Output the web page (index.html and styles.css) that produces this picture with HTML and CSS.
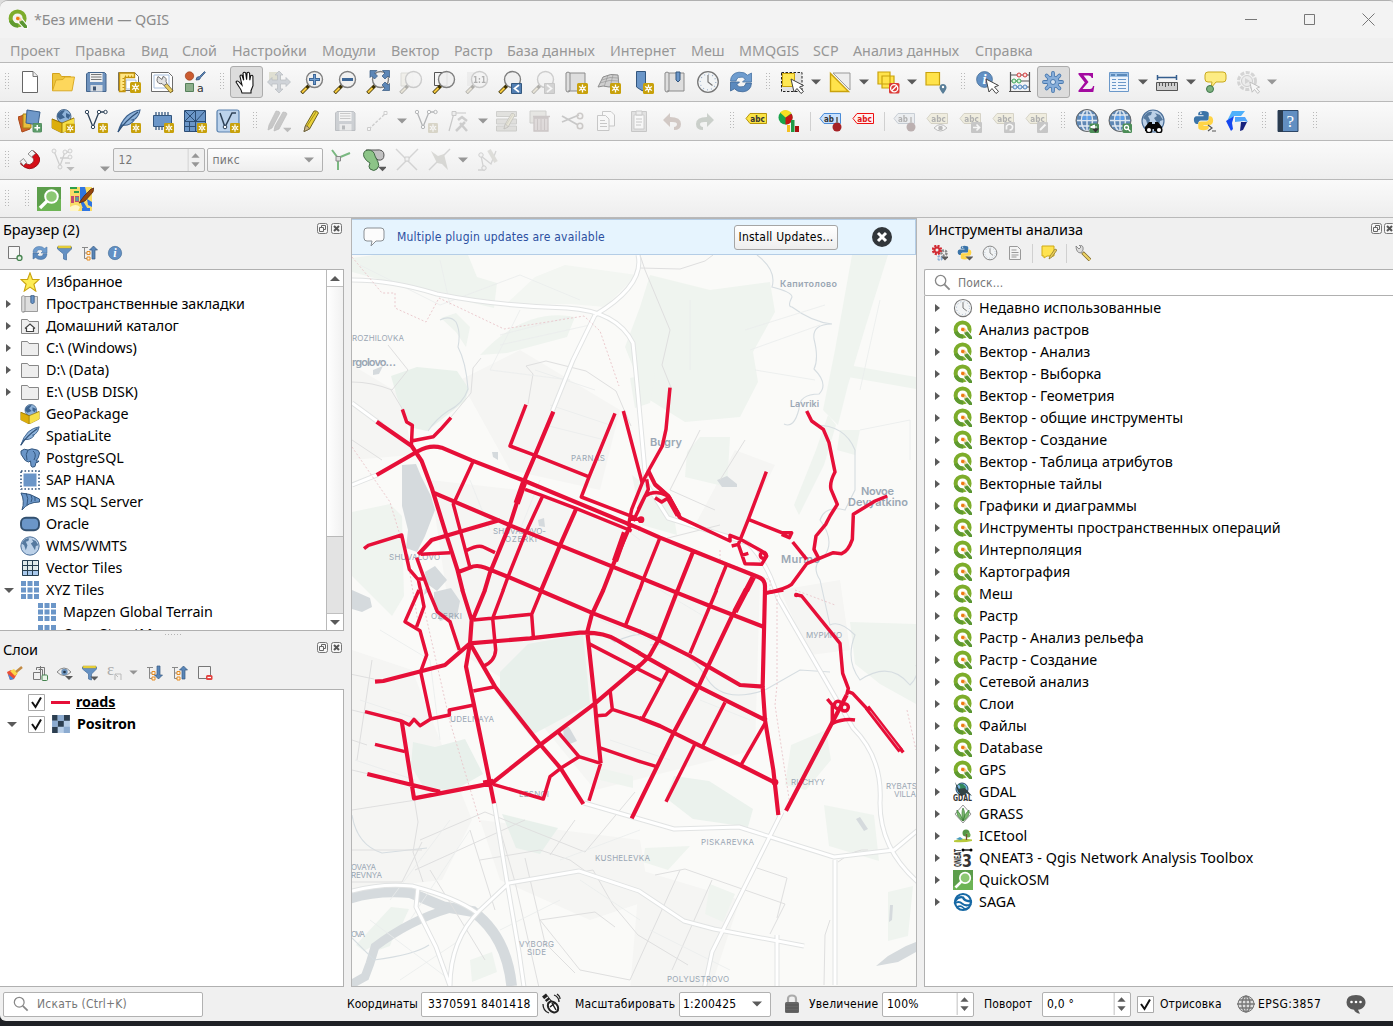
FILE: index.html
```html
<!DOCTYPE html>
<html lang="ru">
<head>
<meta charset="utf-8">
<title>*Без имени — QGIS</title>
<link rel="stylesheet" href="styles.css">
</head>
<body>
<svg class="defs" width="0" height="0" aria-hidden="true">
<symbol id="qgis" viewBox="0 0 20 20"><circle cx="9.6" cy="9.4" r="7" fill="none" stroke="#7dad2b" stroke-width="4"/><path d="M10 16.6a7 7 0 0 1-7-5" fill="none" stroke="#5f9a30" stroke-width="4"/><path d="M10.5 9.5h4l5.5 7v3.2h-4.2l-6-6z" fill="#fff"/><path d="M11.5 11.5h3.2l4.3 5.200v2.300h-2.700l-4.8-5z" fill="#5a9632"/><path d="M8 7.500h3.500l2.500 3-1.500 2-4.500-2z" fill="#f4d29a"/><circle cx="9.800" cy="9.500" r="1.700" fill="#ee7913"/></symbol>
<symbol id="star" viewBox="0 0 11 11"><rect width="11" height="11" rx="1.500" fill="#c8a10b"/><path d="M5.500 1.500v8M2 3.500l7 4M9 3.500l-7 4" stroke="#fff" stroke-width="1.300"/><circle cx="5.500" cy="5.500" r="1.900" fill="#fff"/><circle cx="5.500" cy="5.500" r=".8" fill="#c8a10b"/></symbol>
<symbol id="plus" viewBox="0 0 10 10"><rect width="10" height="10" rx="2" fill="#5b9a68" stroke="#3e7b4a" stroke-width=".6"/><path d="M5 2v6M2 5h6" stroke="#fff" stroke-width="1.600"/></symbol>
<symbol id="dn" viewBox="0 0 10 6"><path d="M0 .5h10L5 5.500z" fill="#5a5a5a"/></symbol>
<symbol id="new" viewBox="0 0 24 24"><path d="M4.500 1.500h10.500l4.500 4.500v16.500h-15z" fill="#fff" stroke="#666"/><path d="M15 1.500v5h4.500" fill="#eee" stroke="#777"/></symbol>
<symbol id="open" viewBox="0 0 24 24"><path d="M1.500 20.500v-17h7l2 3h9v3" fill="#eec53b" stroke="#d3a21d"/><path d="M1.500 20.800 5 10l7-.5 2-2.500h9.500l-2.500 13.800z" fill="#fdd75c" stroke="#d9aa27"/></symbol>
<symbol id="save" viewBox="0 0 24 24"><path d="M2.500 4 4 2.500H20.500l1.500 1.500V21.500H2.500z" fill="#6e92bd" stroke="#44658c"/><path d="M6 3h12.500v9H6z" fill="#f1f1f1"/><path d="M7 4.500h10.500M7 7h10.500M7 9.500h10.500" stroke="#777"/><path d="M6.500 15h12v6.500h-12z" fill="#d7dce2"/><path d="M9 16.500h3v4H9z" fill="#3f5573"/></symbol>
<symbol id="layout" viewBox="0 0 24 24"><path d="M1.500 2.500h16l4 4v14h-20z" fill="#fff" stroke="#6d6d6d"/><path d="M9 10h10v9H9z" fill="#fff" stroke="#a9c0dd"/><path d="M2.500 3h15v4.500H8v14H2.500z" fill="#ffe684" stroke="#c3930a" stroke-width="1.400"/><path d="M6.500 8v13M8 6.500h9" stroke="#c3930a" stroke-dasharray="1 2" stroke-width="2"/><use href="#star" x="13" y="12" width="11" height="11"/></symbol>
<symbol id="layoutm" viewBox="0 0 24 24"><path d="M1.500 2.500h17l4 4v15h-21z" fill="#fff" stroke="#6d6d6d"/><path d="M4 5h15v13H4z" fill="none" stroke="#a9c0dd"/><path d="M14 13l8 9" stroke="#69510f" stroke-width="4"/><path d="M14 13l7.500 8.500" stroke="#e7cd66" stroke-width="2.800"/><path d="M8 6.500l4 3 1-3q4 1 3 5l1 2-3 2-2-2q-4 1-5-3 0-2 1-4z" fill="#e3e3e3" stroke="#656565" stroke-width=".9"/></symbol>
<symbol id="style" viewBox="0 0 24 24"><circle cx="6.500" cy="6" r="4.200" fill="#cb5c31" stroke="#9b3f1c" stroke-width=".7"/><path d="M13 10q0-3.500 3.500-3.500l5-5 .8 1-4.600 5q-.5 3-4.700 2.500z" fill="#5c85b8" stroke="#34557c" stroke-width=".8"/><path d="M2.500 13.500h8v8h-8z" fill="#8dae8b" stroke="#55805a"/><text x="14" y="21.500" class="glyph plain" font-size="11">a</text></symbol>
<symbol id="hand" viewBox="0 0 24 24"><path d="M8 23q-.5-3-2.500-5.500L2 12q1-2 3.500.3L8 15 6 6.500q0-2 2-1.300l1.700 5-.7-7q1.300-2 2.800 0l.8 6.500.5-7q1.500-1.200 2.500.5l.2 7 .9-4.500q1.700-1 2.200.5l.1 9.500-2 5v2.300z" fill="#fff" stroke="#111" stroke-width="1.100"/></symbol>
<symbol id="pan4" viewBox="0 0 24 24"><path d="M2 2h12v12H2z" fill="#dfdfd2"/><path d="M12 1l4 4h-2.500v5H19V7.500l4.500 4.500-4.500 4.500V14h-5.500v5H16l-4 4-4-4h2.500v-5H5v2.500L.5 12 5 7.500V10h5.500V5H8z" fill="#cfd3d8" stroke="#b8bcc0" stroke-width=".7"/></symbol>
<symbol id="lens" viewBox="0 0 24 24"><path d="M1.500 23 9 15.500" stroke="#3d3102" stroke-width="3.600"/><path d="M2 22.500l4.500-4.500" stroke="#f5c93f" stroke-width="2.200"/><circle cx="14.500" cy="9.500" r="8" fill="#eff0f0" fill-opacity=".9" stroke="#808080" stroke-width="1.400"/></symbol>
<symbol id="zin" viewBox="0 0 24 24"><use href="#lens"/><path d="M14.500 4v11M9 9.500h11" stroke="#3d6797" stroke-width="3"/><path d="M14.500 5v9M10 9.500h9" stroke="#6f9dcf" stroke-width="1.200"/></symbol>
<symbol id="zout" viewBox="0 0 24 24"><use href="#lens"/><path d="M9 9.500h11" stroke="#3d6797" stroke-width="3"/></symbol>
<symbol id="zfull" viewBox="0 0 24 24"><use href="#lens"/><path d="M4 .5h7L8.500 3l3 3-3 3-3-3-1.500 1.500zM23.500.5h-7L19 3l-3 3 3 3 3-3 1.500 1.500zM23.500 20.500h-7L19 18l-3-3 3-3 3 3 1.500-1.500z" fill="#5c86b6" stroke="#34587f" stroke-width=".7"/></symbol>
<symbol id="zsel" viewBox="0 0 24 24"><path d="M2 3h12v13H2z" fill="#eee5ad" stroke="#b1ab86"/><use href="#lens"/></symbol>
<symbol id="zlay" viewBox="0 0 24 24"><path d="M2.500 2.500H15v13H2.500z" fill="#f6f6f6" stroke="#555"/><use href="#lens"/></symbol>
<symbol id="znat" viewBox="0 0 24 24"><path d="M2 2h12v14H2z" fill="#ddd"/><use href="#lens"/><text x="8" y="13" class="glyph" font-size="9" textLength="13" lengthAdjust="spacingAndGlyphs">1:1</text></symbol>
<symbol id="zprev" viewBox="0 0 24 24"><use href="#lens"/><path d="M13.500 13.500h10v10h-10z" fill="#527fb3" stroke="#34587f"/><path d="M21 15l-4.500 3.500L21 22" fill="none" stroke="#fff" stroke-width="1.700"/></symbol>
<symbol id="znext" viewBox="0 0 24 24"><use href="#lens"/><path d="M13.500 13.500h10v10h-10z" fill="#999" stroke="#777"/><path d="M16 15l4.500 3.500L16 22" fill="none" stroke="#fff" stroke-width="1.700"/></symbol>
<symbol id="map" viewBox="0 0 24 24"><path d="M2 3q2-2 4 0v17q0 2-2 2t-2-2zM6 3h15v18H4" fill="#dedede" stroke="#8b8b8b"/></symbol>
<symbol id="map2" viewBox="0 0 24 24"><use href="#map"/><use href="#star" x="13" y="13" width="11" height="11"/></symbol>
<symbol id="map3" viewBox="0 0 24 24"><path d="M1 17 6 7q8-4 15-2l1 11-10 1q-6-2-11 0z" fill="#cfcfcf" stroke="#8d8d8d"/><path d="M3 13q9-4 19-2M5 10q8-4 16-2M11 5l-4 12M16 5l-3 12" stroke="#999" stroke-width=".7" fill="none"/><use href="#star" x="13" y="13" width="11" height="11"/></symbol>
<symbol id="bm" viewBox="0 0 24 24"><path d="M6.500 1.500h9V22l-4.500-2-4.500-3z" fill="#6b96c8" stroke="#33567e"/><use href="#star" x="13" y="13" width="11" height="11"/></symbol>
<symbol id="bmk" viewBox="0 0 24 24"><use href="#map"/><path d="M13 2h4v8l-2 2-2-2z" fill="#6b96c8" stroke="#33567e"/></symbol>
<symbol id="clock" viewBox="0 0 24 24"><circle cx="12" cy="12" r="10.300" fill="#f2f4f5" stroke="#777" stroke-width="1.300"/><circle cx="12" cy="12" r="7.800" fill="none" stroke="#9bb0c9" stroke-width="1.200" stroke-dasharray="1 3.080"/><path d="M12 5v7l4.500 3.500" fill="none" stroke="#777" stroke-width="1.200"/></symbol>
<symbol id="refresh" viewBox="0 0 24 24"><path d="M1.500 11Q2 3 10 2.200q6-.3 8.500 3L22.500 3v9h-9l3-3q-3-3-7-1.500-2 1-2.500 3.500z" fill="#6f9dcf" stroke="#4873a4" stroke-width=".8"/><path d="M22.500 13q-.5 8-8.500 8.800-6 .3-8.500-3L1.500 21v-9h9l-3 3q3 3 7 1.500 2-1 2.500-3.500z" fill="#5a89be" stroke="#3d6797" stroke-width=".8"/></symbol>
<symbol id="cursor" viewBox="0 0 14 16"><path d="M1 1l3 13 3-3.500 4 5 2.500-2-4-4.500 4-1.500z" fill="#fff" stroke="#444" stroke-width="1"/></symbol>
<symbol id="select" viewBox="0 0 24 24"><path d="M1.500 2.500h20.500v19H1.500z" fill="#e4e4e4" stroke="#222" stroke-dasharray="2.500 1.500"/><path d="M2.500 3.500h12v13h-12z" fill="#ffe854" stroke="#c9a20c"/><use href="#cursor" x="10" y="8" width="14" height="16"/></symbol>
<symbol id="selval" viewBox="0 0 24 24"><path d="M5 3h17v17z" fill="#eee" stroke="#999"/><path d="M2.500 3.500v18h18z" fill="#ffe34b" stroke="#c9a20c" stroke-width="1.400"/></symbol>
<symbol id="desel" viewBox="0 0 24 24"><path d="M2 2h12v12H2zM6 6h12v12H6z" fill="#ffe34b" stroke="#c9a20c" stroke-width="1.200"/><rect x="13" y="13" width="10.500" height="10.500" rx="1.500" fill="#dc3a37"/><circle cx="18.200" cy="18.200" r="3.600" fill="none" stroke="#fff" stroke-width="1.300"/><path d="M15.700 20.700l5-5" stroke="#fff" stroke-width="1.300"/></symbol>
<symbol id="selloc" viewBox="0 0 24 24"><path d="M2 2.500h13.500V15H2z" fill="#ffe34b" stroke="#c9a20c" stroke-width="1.200"/><path d="M19 24q-4-5-3.500-7 .7-3 3.500-3t3.500 3q.5 2-3.500 7z" fill="#597e98"/><circle cx="19" cy="17" r="1.200" fill="#fff"/></symbol>
<symbol id="info" viewBox="0 0 24 24"><circle cx="12" cy="12" r="10" fill="#6290c4" stroke="#477098"/><text x="9.500" y="18" fill="#fff" class="serif it" font-size="18">i</text></symbol>
<symbol id="ident" viewBox="0 0 24 24"><use href="#info" width="19" height="19"/><use href="#cursor" x="10" y="8" width="14" height="16"/></symbol>
<symbol id="abacus" viewBox="0 0 24 24"><path d="M2.500 2v19M21.500 2v19M1 21.500h22M3 5h18M3 11h18M3 17h18" stroke="#555" stroke-width="1.200"/><g fill="#ffdede" stroke="#d23b3b"><circle cx="11" cy="5" r="2"/><circle cx="17" cy="5" r="2"/></g><g fill="#d8f2da" stroke="#3fa95a"><circle cx="6" cy="11" r="2"/><circle cx="11" cy="11" r="2"/></g><g fill="#d6e6f8" stroke="#4f86c0"><circle cx="7" cy="17" r="2"/><circle cx="12" cy="17" r="2"/><circle cx="17" cy="17" r="2"/></g></symbol>
<symbol id="gear" viewBox="0 0 24 24"><g stroke="#4878ae" stroke-width="3.800" stroke-linecap="round"><path d="M12 3v18M3 12h18M5.600 5.600l12.800 12.800M18.400 5.600 5.600 18.400"/></g><circle cx="12" cy="12" r="6.500" fill="#4878ae"/><g stroke="#86add9" stroke-width="2.200" stroke-linecap="round"><path d="M12 3v18M3 12h18M5.600 5.600l12.800 12.800M18.400 5.600 5.600 18.400"/></g><circle cx="12" cy="12" r="5.700" fill="#86add9"/><circle cx="12" cy="12" r="2.500" fill="#d7e4f3" stroke="#4878ae"/></symbol>
<symbol id="sigma" viewBox="0 0 24 24"><path d="M4.500 3H19v5h-1.300q-.5-2.500-3-2.500H9.500L14.500 12l-6 7H16q2.500 0 3-3h1.300l-1 6H4.500v-1.500l6.300-8-6.300-8z" fill="#a30ba0"/></symbol>
<symbol id="table" viewBox="0 0 24 24"><path d="M2.500 2.500h19v19h-19z" fill="#eef4fb" stroke="#6b98c9"/><path d="M3 3h18v4H3z" fill="#9fc2e6"/><path d="M4 5h4M10 5h10" stroke="#4677ab" stroke-width="1.500"/><path d="M5 9.500h4M11 9.500h8M5 12.500h4M11 12.500h8M5 15.500h4M11 15.500h8M5 18.500h4M11 18.500h8" stroke="#6b98c9"/></symbol>
<symbol id="ruler" viewBox="0 0 24 24"><path d="M2.500 5v5M21.500 5v5M2.500 7.500h19" stroke="#345e8e" stroke-width="1.500"/><path d="M1.500 12.500h21v8h-21z" fill="#cfcfcf" stroke="#555"/><path d="M4.500 13v3M7.500 13v3M10.500 13v4M13.500 13v3M16.500 13v3M19.500 13v3" stroke="#555"/></symbol>
<symbol id="tip" viewBox="0 0 24 24"><path d="M5 2h15q3 0 3 3v4q0 3-3 3h-7l-5 6 1-6H5q-3 0-3-3V5q0-3 3-3z" fill="#fdec83" stroke="#c9a91d"/><circle cx="7" cy="19" r="3.500" fill="#7cb17e" stroke="#41764c"/></symbol>
<symbol id="action" viewBox="0 0 24 24"><circle cx="11" cy="11" r="8.500" fill="#eee" stroke="#999" stroke-width="3" stroke-dasharray="4 1.500"/><circle cx="11" cy="11" r="5.500" fill="#ddd" stroke="#888"/><path d="M9 8v6l5-3z" fill="#999"/><use href="#cursor" x="13" y="11" width="11" height="13"/></symbol>
<symbol id="dsm" viewBox="0 0 24 24"><path d="M0 8l6-2 6 14-8 3z" fill="#cf6127" stroke="#a9481a"/><path d="M5 5h8v14H5z" fill="#e8bd3f" stroke="#a78115"/><path d="M9 1l13 2-2 13-12-2z" fill="#6f98c9" stroke="#3b618e"/><use href="#plus" x="14.500" y="14" width="9.500" height="9.500"/></symbol>
<symbol id="gpkgb" viewBox="0 0 24 24"><path d="M1 10v9l10 5V14z" fill="#dcae0c" stroke="#8b6b06" stroke-width=".7"/><path d="M11 14l12-5v9l-12 6z" fill="#f7e049" stroke="#8b6b06" stroke-width=".7"/><circle cx="13" cy="7.500" r="7" fill="#8fb3d9" stroke="#32557a" stroke-width=".8"/><path d="M7 4.500q4-4 7-3l-3 4 3 3-5 2-3-3zM15 4l4.500 2-2 4-2.500-2z" fill="#3e648f"/><path d="M1 10l10 4v10L1 19z" fill="#dcae0c"/><path d="M11 14l12-5v9l-12 6z" fill="#f7e049"/><path d="M1 10l10 4 12-5M11 14v10" fill="none" stroke="#8b6b06" stroke-width=".8"/></symbol>
<symbol id="gpkg" viewBox="0 0 24 24"><use href="#gpkgb"/><use href="#star" x="14.500" y="14.500" width="9.500" height="9.500"/></symbol>
<symbol id="vec" viewBox="0 0 24 24"><path d="M3 3l6 15 6-15h6" fill="none" stroke="#2f4358" stroke-width="1.300"/><g fill="#fff" stroke="#2f4358"><circle cx="3" cy="3" r="1.700"/><circle cx="9" cy="18" r="1.700"/><circle cx="15" cy="3" r="1.700"/><circle cx="21.500" cy="3" r="1.700"/></g><use href="#star" x="14" y="14" width="10" height="10"/></symbol>
<symbol id="featherb" viewBox="0 0 24 24"><path d="M1 23q3-10 9-16 6-5 13-6-1 6-5 9l-3 1 2 .5q-5 6-12 4.500z" fill="#8fb3da" stroke="#3b618e" stroke-width="1.100"/><path d="M1 23Q8 12 21 3" fill="none" stroke="#2f5077" stroke-width="1.300"/></symbol>
<symbol id="feather" viewBox="0 0 24 24"><use href="#featherb"/><use href="#star" x="14" y="14" width="10" height="10"/></symbol>
<symbol id="chip" viewBox="0 0 24 24"><path d="M6 3v18M9 3v18M12 3v18M15 3v18M18 3v18" stroke="#33567e" stroke-width="1.300"/><path d="M3.500 6.500h18v11h-18z" fill="#6b96c8" stroke="#33567e"/><use href="#star" x="14" y="14" width="10" height="10"/></symbol>
<symbol id="mesh" viewBox="0 0 24 24"><path d="M1.500 1.500h21v21h-21z" fill="#6b96c8" stroke="#2c4d74"/><path d="M1.500 12.500h21M12.500 1v21M2 2l10.500 10.500L22 2M2 12 12 2M2 17.500h10M6.500 12.500V22" stroke="#2c4d74" stroke-width="1" fill="none"/><use href="#star" x="14" y="14" width="10" height="10"/></symbol>
<symbol id="virt" viewBox="0 0 24 24"><rect x="1" y="1" width="22" height="22" rx="2" fill="#bcd3ec" stroke="#5880ad" stroke-width="1.200"/><path d="M4 4l5 14L16 4h4" fill="none" stroke="#2f4358" stroke-width="1.500"/><circle cx="9" cy="18" r="1.800" fill="#fff" stroke="#2f4358"/><use href="#star" x="14" y="14" width="10" height="10"/></symbol>
<symbol id="pencil" viewBox="0 0 24 24"><path d="M4 22.500l1.500-6L14 2q3-1 4.500 2L9.500 20z" fill="#ead139" stroke="#6d6122"/><path d="M4 22.500l1.500-6q3 .5 4 3.500z" fill="#ccb784" stroke="#5b513a" stroke-width=".7"/><path d="M7 17 16 3" stroke="#a08e17"/></symbol>
<symbol id="pencils" viewBox="0 0 24 24"><g fill="#777" stroke="#555" stroke-width=".7"><path d="M1 21l1-5L9 2q4 0 4 2L5 19z"/><path d="M7 22l1-5 8-14q4 0 4 2l-8 15z"/></g><use href="#dn" x="16" y="18" width="9" height="6"/></symbol>
<symbol id="line" viewBox="0 0 24 24"><path d="M3 20 20 4" stroke="#888" stroke-width="1.400" stroke-dasharray="3 1.500"/><path d="M1.500 18.500h3v3h-3zM18 2.500h3v3h-3z" fill="#fff" stroke="#888"/></symbol>
<symbol id="vtool" viewBox="0 0 24 24"><path d="M2 22 7 4h12" fill="none" stroke="#777" stroke-width="1.200"/><path d="M5 2.500h4v4H5z" fill="#ddd" stroke="#777"/><path d="M9 22l9-9M20 22l-7-8M11 11l4-3 5 4" fill="none" stroke="#888" stroke-width="2.500"/></symbol>
<symbol id="bulk" viewBox="0 0 24 24"><path d="M1.500 2.500h20v5h-20zM1.500 10h20v5h-20zM1.500 17h20v5h-20z" fill="#bebd9e" stroke="#8b8a71"/><use href="#pencil" x="6" width="18" height="24"/></symbol>
<symbol id="trash" viewBox="0 0 24 24"><path d="M2 2h16v12H2z" fill="#cfcaa5" stroke="#8b8a71"/><path d="M5 7.500h17M6 9v13h14V9z" fill="#d8a5a5" stroke="#a86b6b" stroke-width="1.300"/><path d="M9.500 10v11M13 10v11M16.500 10v11" stroke="#a86b6b"/></symbol>
<symbol id="cut" viewBox="0 0 24 24"><path d="M1 7l16 9M1 13l17-7" stroke="#777" stroke-width="1.800"/><circle cx="19" cy="7" r="2.700" fill="none" stroke="#976" stroke-width="1.600"/><circle cx="19" cy="17" r="2.700" fill="none" stroke="#976" stroke-width="1.600"/></symbol>
<symbol id="copy" viewBox="0 0 24 24"><g fill="#fff" stroke="#777"><path d="M8.500 2.500H17l3.500 3.500v11h-12z"/><path d="M3.500 6.500h8l3.500 3.500v11.500H3.500z"/></g><path d="M6 11.500h5M6 14.500h7M6 17.500h7" stroke="#777"/></symbol>
<symbol id="paste" viewBox="0 0 24 24"><path d="M4.500 2.500h15v20h-15z" fill="#bbb" stroke="#777"/><path d="M7 6h10v14H7z" fill="#fff" stroke="#888"/><path d="M9 2h6v4H9zM9 10h6M9 13h6M9 16h5" fill="#ddd" stroke="#777"/></symbol>
<symbol id="undo" viewBox="0 0 24 24"><path d="M3 11l7-7v4q11 0 11 7 0 6-7 6v-3q3-.5 3-3t-7-2v5z" fill="#a08a80"/></symbol>
<symbol id="redo" viewBox="0 0 24 24"><path d="M21 11l-7-7v4Q3 8 3 15q0 6 7 6v-3q-3-.5-3-3t7-2v5z" fill="#8f9b8f"/></symbol>
<symbol id="tagy" viewBox="0 0 24 24"><path d="M2 9.500 6 4.500h16.500v10H6z" fill="#fbe445" stroke="#b7950b"/><text x="6.300" y="12.600" class="glyph" font-size="9" textLength="14.500" lengthAdjust="spacingAndGlyphs">abc</text></symbol>
<symbol id="tagr" viewBox="0 0 24 24"><path d="M2 9.500 6 4.500h16.500v10H6z" fill="#fff0f0" stroke="#e11"/><text x="6.300" y="12.600" class="glyph red" font-size="9" textLength="14.500" lengthAdjust="spacingAndGlyphs">abc</text></symbol>
<symbol id="tagb" viewBox="0 0 24 24"><path d="M2 9.500 6 4.500h16.500v10H6z" fill="#c9e2ff" stroke="#4a8cd8"/><text x="6" y="12.600" class="glyph" font-size="9" textLength="10" lengthAdjust="spacingAndGlyphs">ab</text><circle cx="19" cy="18" r="4.500" fill="#a62226"/><path d="M19 8v6" stroke="#777" stroke-width="2"/></symbol>
<symbol id="tage" viewBox="0 0 24 24"><use href="#tagy"/><path d="M9 19q6.500-7 13 0-6.500 6-13 0z" fill="#fff" stroke="#555"/><circle cx="15.500" cy="19" r="2.300" fill="#555"/></symbol>
<symbol id="taga" viewBox="0 0 24 24"><use href="#tagy"/><rect x="13" y="13" width="11" height="11" rx="1" fill="#777"/><path d="M15 18.500h6M18.500 15.500l3 3-3 3" fill="none" stroke="#fff" stroke-width="1.700"/></symbol>
<symbol id="tago" viewBox="0 0 24 24"><use href="#tagy"/><rect x="13" y="13" width="11" height="11" rx="1" fill="#777"/><path d="M15.500 20.500V17q3-3.500 6 0 .5 4-3 4" fill="none" stroke="#fff" stroke-width="1.700"/></symbol>
<symbol id="tagp" viewBox="0 0 24 24"><use href="#tagy"/><rect x="13" y="13" width="11" height="11" rx="1" fill="#777"/><path d="M16 21l5.500-5.500" stroke="#fff" stroke-width="2"/></symbol>
<symbol id="pie" viewBox="0 0 24 24"><circle cx="8.500" cy="8.500" r="7" fill="#19a44b"/><path d="M8.500 8.500v7a7 7 0 0 0 6-10.700z" fill="#c41414"/><path d="M8.500 8.500 3 3.500q6-5 11.500.5z" fill="#f8de22"/><path d="M10 16h3v7h-3z" fill="#f5c020"/><path d="M14 11h3.500v12H14z" fill="#1f9a45"/><path d="M18 17h4v6h-4z" fill="#a81010"/></symbol>
<symbol id="wglobe" viewBox="0 0 24 24"><circle cx="12" cy="11.500" r="11" fill="#5f88b5"/><path d="M4 6h16M2 11.500h20M4 17h16M12 1v21" stroke="#dfe8f2" stroke-width="1.500"/><ellipse cx="12" cy="11.500" rx="5.500" ry="10.500" fill="none" stroke="#dfe8f2" stroke-width="1.500"/><circle cx="12" cy="11.500" r="11" fill="none" stroke="#666" stroke-width="1"/><path d="M8 7h3.500v4H7zM12.500 7H16v4h-3.500z" fill="#5c9ee8"/></symbol>
<symbol id="globe1" viewBox="0 0 24 24"><use href="#wglobe"/><rect x="14.500" y="14.500" width="9.500" height="9.500" rx="1.500" fill="#4c8d57"/><path d="M15.500 18l4-2v4zM18 18h4" fill="#fff" stroke="#fff"/><path d="M17 19.500h7l-3.500 4z" fill="#333"/></symbol>
<symbol id="globe2" viewBox="0 0 24 24"><use href="#wglobe"/><rect x="14.500" y="14.500" width="9.500" height="9.500" rx="1.500" fill="#4c8d57"/><circle cx="18.500" cy="18.500" r="2" fill="none" stroke="#fff" stroke-width="1.300"/><path d="M20 20l2.500 2.500" stroke="#fff" stroke-width="1.300"/></symbol>
<symbol id="globew" viewBox="0 0 24 24"><circle cx="12" cy="12" r="11" fill="#bcd1e8" stroke="#4d719a" stroke-width="1.200"/><path d="M4 6q3-4 7-3l-1 3-3 1 2 4-2 6-2-6-3-2zM14 4l5 2 3 5-3 1-1 5-3-5-2-3 3-2z" fill="#55799f"/></symbol>
<symbol id="bino" viewBox="0 0 24 24"><use href="#globew"/><path d="M8 13h3v2h3v-2h3l4 5v4h-8v-2h-2v2H4v-4z" fill="#080808"/><circle cx="8" cy="21" r="2.800" fill="#fff" stroke="#080808" stroke-width="1.500"/><circle cx="18" cy="21" r="2.800" fill="#fff" stroke="#080808" stroke-width="1.500"/></symbol>
<symbol id="py" viewBox="0 0 24 24"><path d="M6 4q0-3 6-3t6 3v6q0 2-2 2H9q-3 0-3 4H4q-3-1-3-5t3-4h8V6H6z" fill="#3b74a8"/><path d="M18 7h2q3 1 3 5t-3 5h-8v1h6v2q0 3-6 3t-6-3v-5q0-2 3-2h6q3 0 3-4z" fill="#ffd447"/><circle cx="9" cy="3.500" r="1" fill="#fff"/></symbol>
<symbol id="pycon" viewBox="0 0 24 24"><use href="#py" width="21" height="21" x="1" y="1"/><path d="M16 16l4 3-4 3M20 22h4" stroke="#555" stroke-width="1.200" fill="none"/></symbol>
<symbol id="cloud" viewBox="0 0 24 24"><path d="M7 2h13l-4 5H9L2 12z" fill="#4fb1fb"/><path d="M1 12l8-5-2 7 1 6-2 2z" fill="#1547ef"/><path d="M10 8h10l3 5-4-1-9 1z" fill="#4fa4fb"/><path d="M16 13l6 0-4 8-3 1z" fill="#16227e"/></symbol>
<symbol id="help" viewBox="0 0 24 24"><path d="M2 1.500h20v21H2z" fill="#628fc2" stroke="#2c4666"/><path d="M2 1h5v22H2z" fill="#2b3c50"/><text x="10.500" y="17.500" fill="#fff" class="serif plain" font-size="17">?</text></symbol>
<symbol id="magnet" viewBox="0 0 24 24"><g transform="translate(1.500 0)"><path d="M4 12l3 4q3 2 6-1 3-3 0-6l-3-3 4-3q10 7 4 14-8 8-17-1z" fill="#d60e17" stroke="#8b060c" stroke-width=".8"/><path d="M.5 13.500l3.500-3 3 4-3 3zM8.500 6l4-4L16 5.500l-4 3.500z" fill="#f4f4f4" stroke="#777" stroke-width=".8"/></g></symbol>
<symbol id="snap" viewBox="0 0 24 24"><path d="M3 3l6 15L14 4h5M9 10h10M14 15h5" fill="none" stroke="#888" stroke-width="1.300"/><g fill="#eee" stroke="#888"><circle cx="3" cy="3" r="2"/><circle cx="9" cy="19" r="2"/><circle cx="14" cy="4" r="2"/><circle cx="19" cy="3" r="2"/><circle cx="19" cy="9" r="2"/></g><use href="#dn" x="15" y="18.500" width="9" height="5"/></symbol>
<symbol id="topo" viewBox="0 0 24 24"><path d="M3 2l6 8 12-5M9 10v12" stroke="#7ab881" stroke-width="2" fill="none"/><path d="M7 8.500h4.500V13H7z" fill="#ddd" stroke="#888"/></symbol>
<symbol id="overlap" viewBox="0 0 24 24"><path d="M4 2h10q8-1 8 5 0 6-6 5l-3-3z" fill="#c1c1c1" stroke="#555"/><path d="M2 9q-2-6 4-7 6 0 7 6l3 6q2 4-1 7-3 3-7 0-2-2 0-6-4-2-6-6z" fill="#8cc487" stroke="#416a45"/><use href="#dn" x="16" y="18" width="9" height="6"/></symbol>
<symbol id="cross" viewBox="0 0 24 24"><path d="M1 1l21 21M23 1 2 22" stroke="#999" stroke-width="1.500"/><path d="M10 9h4v4h-4z" fill="#eee" stroke="#888"/></symbol>
<symbol id="selfsnap" viewBox="0 0 24 24"><path d="M1 22 22 1" stroke="#999" stroke-width="1.500"/><path d="M3 3l7 5 6-2 4 16-6-6-5-1z" fill="#a9a684"/></symbol>
<symbol id="trace" viewBox="0 0 24 24"><path d="M2 22h6l-3-14 10 8 5-13" fill="none" stroke="#999" stroke-width="1.300"/><circle cx="5" cy="7" r="2.200" fill="#eee" stroke="#888"/><circle cx="8" cy="20" r="2.200" fill="#eee" stroke="#888"/><path d="M13 2l7 12" stroke="#b8b48b" stroke-width="4"/></symbol>
<symbol id="qosm" viewBox="0 0 24 24"><path d="M0 0h24v24H0z" fill="#6db455"/><path d="M0 0h24v12Q12 11 0 20z" fill="#5c9e4b"/><circle cx="14.500" cy="9.500" r="6.300" fill="#8cc873" stroke="#fff" stroke-width="2"/><path d="M10 14l-7 7" stroke="#fff" stroke-width="3.200"/></symbol>
<symbol id="osmedit" viewBox="0 0 24 24"><path d="M0 0h22v24H0z" fill="#f8dc67"/><path d="M10 0h5l2 8-4 6 6 10h-5l-4-10z" fill="#2f75e1"/><path d="M0 20q6-4 10 0l-2 4H0z" fill="#fff6c8"/><path d="M12 21h8v3h-8zM17 12l5 3v5l-4-2z" fill="#2f75e1"/><path d="M1 9h3v7H1zM5 9h4v6H5z" fill="#c34971"/><path d="M5.500 10h3v4h-3z" fill="#58a19a"/><path d="M0 1h7M4 5h5" stroke="#2d9f49" stroke-width="2"/><path d="M9 16l5-7 7-7 3-1-1 4-8 9z" fill="#96450f" stroke="#4f2104" stroke-width=".7"/></symbol>
<symbol id="addl" viewBox="0 0 16 16"><path d="M1.500 1.500h11v12h-11z" fill="#f6f6f6" stroke="#777"/><circle cx="12.500" cy="13" r="2.500" fill="#e3f3e3" stroke="#45834f" stroke-width="1.300"/></symbol>
<symbol id="dell" viewBox="0 0 16 16"><path d="M1.500 1.500h12v12h-12z" fill="#f3f3f3" stroke="#777"/><rect x="9" y="10" width="6.500" height="5" rx="1.500" fill="#e2403e"/><path d="M10.500 12.500h3.500" stroke="#fff" stroke-width="1.200"/></symbol>
<symbol id="filter" viewBox="0 0 16 16"><path d="M.5 2h14v2l-5 5v6l-3-1V9l-6-5z" fill="#6591c3" stroke="#456f9d" stroke-width=".7"/><path d="M1 1h13v2H1z" fill="#f4de41" stroke="#b69b1d" stroke-width=".5"/></symbol>
<symbol id="filterd" viewBox="0 0 16 16"><use href="#filter"/><use href="#dn" x="8" y="11" width="9" height="5"/></symbol>
<symbol id="tree" viewBox="0 0 16 16"><path d="M0 2.500h6M2.500 3v10.500H5M2.500 8H5" fill="none" stroke="#888"/><path d="M5 6.500h3v3H5zM5 12h3v3H5z" fill="#fff2df" stroke="#e58c23"/></symbol>
<symbol id="up" viewBox="0 0 16 16"><use href="#tree"/><path d="M11.500 1l4 4H13v9h-3V5H7.500z" fill="#5986b8" stroke="#365a82" stroke-width=".7"/></symbol>
<symbol id="down" viewBox="0 0 16 16"><use href="#tree"/><path d="M11.500 14l4-4H13V1h-3v9H7.500z" fill="#5986b8" stroke="#365a82" stroke-width=".7"/></symbol>
<symbol id="brush" viewBox="0 0 16 16"><path d="M0 7l4-2 6 4-3 5-4 1z" fill="#eb4d34"/><path d="M1 9l6 5-4 1z" fill="#448be0"/><path d="M3 6l5 5 3-3-4-4z" fill="#fbd64b"/><path d="M9 7l6-5" stroke="#c28a43" stroke-width="2.500"/></symbol>
<symbol id="group" viewBox="0 0 16 16"><path d="M4.500 5V2.500h8v9M1.500 7.500h7v7h-7z" fill="none" stroke="#777"/><path d="M8.500 10V1M6.500 4.500h4v6" fill="none" stroke="#777"/><rect x="10" y="10" width="5.500" height="5.500" rx="1" fill="#e8f4e8" stroke="#45834f"/></symbol>
<symbol id="eye" viewBox="0 0 16 16"><path d="M0 7q7-8 14 0-7 7-14 0z" fill="#eee" stroke="#888"/><circle cx="7.500" cy="7" r="3.200" fill="#6d93bb"/><circle cx="7.500" cy="7" r="1.300" fill="#234"/><use href="#dn" x="8" y="10.500" width="8" height="5"/></symbol>
<symbol id="eps" viewBox="0 0 16 16"><text x="0" y="10" class="serif plain" fill="#aaa" font-size="17">ε</text><path d="M8 15V9h6v6M8 9l3 3" stroke="#bbb" fill="none"/></symbol>
<symbol id="gears" viewBox="0 0 16 16"><g fill="none" stroke-dasharray="2 1.140"><circle cx="5" cy="5" r="4" stroke="#d12b34" stroke-width="2.500"/><circle cx="12" cy="8" r="2.500" stroke="#888" stroke-width="2.500"/><circle cx="8" cy="13" r="2" stroke="#8cafd4" stroke-width="2"/></g><circle cx="5" cy="5" r="2.500" fill="none" stroke="#d12b34" stroke-width="2"/><use href="#dn" x="9" y="11" width="8" height="5"/></symbol>
<symbol id="pyd" viewBox="0 0 16 16"><use href="#py" width="15" height="15"/><use href="#dn" x="8" y="11" width="9" height="5"/></symbol>
<symbol id="doc" viewBox="0 0 16 16"><path d="M2.500 1.500h8l3 3v10h-11z" fill="#f4f4f4" stroke="#999"/><path d="M4.500 5h5M4.500 7.500h7M4.500 10h7M4.500 12h5" stroke="#999"/></symbol>
<symbol id="edit" viewBox="0 0 16 16"><path d="M1 1h12v10H6l-3 2v-2H1z" fill="#ffe34f" stroke="#cfaa17"/><path d="M8 14l1-3 5-7 2 1-5 7z" fill="#e9cc57" stroke="#83712d" stroke-width=".7"/></symbol>
<symbol id="wrench" viewBox="0 0 16 16"><path d="M7.500 7.500l7.500 7.500" stroke="#735d24" stroke-width="3.500"/><path d="M8 8l7 7" stroke="#ecd265" stroke-width="2.300"/><path d="M1 1l3 3 2-2-2-2q5 0 4 5L6 8Q1 8 1 1z" fill="#ddd" stroke="#777" stroke-width=".8"/></symbol>
<symbol id="fav" viewBox="0 0 18 18"><path d="M9 .8l2.200 6H17l-4.500 4.200 1.700 6.200L9 13.600l-5.200 3.600 1.700-6.200L1 6.800h5.800z" fill="#fdec55" stroke="#c9a20c"/></symbol>
<symbol id="folder" viewBox="0 0 20 20"><path d="M1.500 17.500v-14h6l1.500 2h9.500v12z" fill="#eee" stroke="#888"/></symbol>
<symbol id="home" viewBox="0 0 20 20"><use href="#folder"/><path d="M5 12.500l5-4.500 5 4.500M6.500 12v3.500h7V12" fill="#fff" stroke="#444" stroke-width="1.200"/></symbol>
<symbol id="pg" viewBox="0 0 20 20"><path d="M1 3q3-3 7-1 4-2 7-.5 4 0 4.500 3.500-.5 5-3.500 8h3q-1 2-3 1.500l-1 4q-3 1.500-4-.5l-.5-5-2 1q-4-1-5-4Q0 6 1 3z" fill="#6b96c8" stroke="#33567e"/><path d="M8 2q-3 4-1 10M13 3q4 3 1 9" fill="none" stroke="#33567e"/></symbol>
<symbol id="hana" viewBox="0 0 20 20"><path d="M1 1h18v18H1z" fill="none" stroke="#33567e" stroke-width="1.600" stroke-dasharray="1.600 1.900"/><path d="M3.500 3.500h13v13h-13z" fill="#6b96c8"/></symbol>
<symbol id="mssql" viewBox="0 0 20 20"><path d="M1 1q9 0 18.500 6v3Q8 10 2 18q3-9-1-17z" fill="#6b96c8" stroke="#33567e"/><path d="M6 1q3 5 1 12M11 3q2 4 0 7M15 5v4" fill="none" stroke="#33567e"/></symbol>
<symbol id="oracle" viewBox="0 0 20 20"><rect x="1" y="3.800" width="18" height="12.500" rx="5" fill="#6b96c8" stroke="#33506f" stroke-width="1.900"/></symbol>
<symbol id="vt" viewBox="0 0 20 20"><path d="M2.500 2.500h15v15h-15z" fill="#dfe9ea"/><path d="M2 12h16v6H2z" fill="#a8c8ec"/><path d="M2.500 2.500h16v15h-16zM2.500 7.500h16M2.500 12.500h16M7.500 2.500v15M12.500 2.500v15" fill="none" stroke="#263e50"/></symbol>
<symbol id="xyz" viewBox="0 0 18 18"><path d="M0 0h5v5H0zM6.500 0h5v5h-5zM13 0h5v5h-5zM0 6.500h5v5H0zM6.500 6.500h5v5h-5zM13 6.500h5v5h-5zM0 13h5v5H0zM6.500 13h5v5h-5zM13 13h5v5h-5z" fill="#6b96c8"/></symbol>
<symbol id="raster" viewBox="0 0 18 18"><path d="M1 1h16v16H1z" fill="#b6cde7"/><path d="M1 1h5v5H1zM11.500 1H17v5h-5.500zM6 6h5.500v5.500H6zM1 11.500h5V17H1z" fill="#2c3e50"/><path d="M6 1h5.500v5H6zM1 6h5v5.500H1zM11.500 11.500H17V17h-5.500z" fill="#8cabd0"/></symbol>
<symbol id="gdal" viewBox="0 0 20 20"><circle cx="9" cy="7" r="6" fill="#7cb7e4" stroke="#28506a"/><path d="M5 2q4 3 1 5l5 3 2-5-3-3z" fill="#32885d"/><path d="M2 0l4 7 6-1 7 8-6-3-4 3-4-4z" fill="#344"/><text x="0" y="19" class="glyph" font-size="8.500" textLength="19" lengthAdjust="spacingAndGlyphs">GDAL</text></symbol>
<symbol id="grass" viewBox="0 0 20 20"><path d="M10 1l8 9-8 9-8-9z" fill="#fff" stroke="#999"/><path d="M10 17Q3 13 4 6q4 4 6 11-2-9 0-13 3 5 0 13 1-7 6-11 1 7-6 11z" fill="#7cbb70" stroke="#3b7a35" stroke-width=".7"/></symbol>
<symbol id="ice" viewBox="0 0 20 20"><path d="M1 14.500q8-3 18-1V15q-8 2-18 1z" fill="#b7c93c"/><circle cx="13" cy="7" r="3.500" fill="#549445"/><circle cx="15" cy="9" r="2.500" fill="#6aa84f"/><path d="M13.500 8v6" stroke="#765332" stroke-width="1.300"/><path d="M3 13l4-2 3 2-3 1z" fill="#4a9cc0"/></symbol>
<symbol id="qneat" viewBox="0 0 20 20"><text transform="translate(7.500 19) rotate(-90)" class="glyph" font-size="8" textLength="18" lengthAdjust="spacingAndGlyphs">QNEAT</text><text x="9" y="19" class="glyph" font-size="18" textLength="10" lengthAdjust="spacingAndGlyphs">3</text><path d="M9 2h10" stroke="#222" stroke-width="1.500"/><circle cx="10" cy="2" r="1.500"/><circle cx="18" cy="2" r="1.500"/></symbol>
<symbol id="saga" viewBox="0 0 20 20"><circle cx="10" cy="10" r="8" fill="#fff" stroke="#1769a5" stroke-width="2.200"/><path d="M2 9q4-5 8-3.500 2 4.500 9 3.500" fill="none" stroke="#1769a5" stroke-width="2.400"/><path d="M1 11.500q5-3 8 0 4 3.500 9 .5" fill="none" stroke="#1769a5" stroke-width="2"/><path d="M4 15q4-2 6 .5t5 .5" fill="none" stroke="#1769a5" stroke-width="1.600"/></symbol>
<symbol id="search" viewBox="0 0 18 18"><circle cx="7" cy="7" r="5.500" fill="none" stroke="#888" stroke-width="1.400"/><path d="M11 11l5.500 5.500" stroke="#888" stroke-width="2"/></symbol>
<symbol id="float" viewBox="0 0 11 11"><rect x=".5" y=".5" width="10" height="10" rx="2" fill="#f6f6f6" stroke="#777"/><path d="M4.500 4V2.500h4v4H7M2.500 4.500h4v4h-4z" fill="none" stroke="#666"/></symbol>
<symbol id="close" viewBox="0 0 11 11"><rect x=".5" y=".5" width="10" height="10" rx="2" fill="#f6f6f6" stroke="#777"/><path d="M3 3l5 5M8 3L3 8" stroke="#555" stroke-width="2"/></symbol>
<symbol id="check" viewBox="0 0 17 17"><path d="M.5.5h16v16H.5z" fill="#fff" stroke="#aaa"/><path d="M4 8l3.500 5L13 3.500" fill="none" stroke="#111" stroke-width="2"/></symbol>
<symbol id="spin" viewBox="0 0 17 24"><path d="M.5 0v24" stroke="#bbb"/><path d="M4 9.500l4.500-5 4.500 5zM4 14.500l4.500 5 4.500-5z" fill="#5c5c5c"/></symbol>
</svg>

<div class="window">
<header class="titlebar"><svg class="logo"><use href="#qgis"/></svg><span class="title">*Без имени — QGIS</span>
<svg class="winbtns" viewBox="0 0 130 14"><path d="M0 7.500h12M59.500 2.500h10v10h-10zM117.500 1.500l12 12M129.500 1.500l-12 12" fill="none" stroke="#777"/></svg></header>
<nav class="menu"><span>Проект</span><span>Правка</span><span>Вид</span><span>Слой</span><span>Настройки</span><span>Модули</span><span>Вектор</span><span>Растр</span><span>База данных</span><span>Интернет</span><span>Меш</span><span>MMQGIS</span><span>SCP</span><span>Анализ данных</span><span>Справка</span></nav>

<div class="bar"><b class="h first"></b><svg class="t"><use href="#new"/></svg><svg class="t"><use href="#open"/></svg><svg class="t"><use href="#save"/></svg><svg class="t"><use href="#layout"/></svg><svg class="t"><use href="#layoutm"/></svg><svg class="t"><use href="#style"/></svg><b class="h"></b><span class="on"><svg class="t"><use href="#hand"/></svg></span><svg class="t"><use href="#pan4"/></svg><svg class="t"><use href="#zin"/></svg><svg class="t"><use href="#zout"/></svg><svg class="t"><use href="#zfull"/></svg><svg class="t off"><use href="#zsel"/></svg><svg class="t"><use href="#zlay"/></svg><svg class="t off"><use href="#znat"/></svg><svg class="t"><use href="#zprev"/></svg><svg class="t off"><use href="#znext"/></svg><svg class="t"><use href="#map2"/></svg><svg class="t"><use href="#map3"/></svg><svg class="t"><use href="#bm"/></svg><svg class="t"><use href="#bmk"/></svg><svg class="t"><use href="#clock"/></svg><svg class="t"><use href="#refresh"/></svg><b class="h"></b><svg class="t"><use href="#select"/></svg><svg class="a"><use href="#dn"/></svg><svg class="t"><use href="#selval"/></svg><svg class="a"><use href="#dn"/></svg><svg class="t"><use href="#desel"/></svg><svg class="a"><use href="#dn"/></svg><svg class="t"><use href="#selloc"/></svg><b class="h"></b><svg class="t"><use href="#ident"/></svg><svg class="t"><use href="#abacus"/></svg><span class="on"><svg class="t"><use href="#gear"/></svg></span><svg class="t"><use href="#sigma"/></svg><svg class="t"><use href="#table"/></svg><svg class="a"><use href="#dn"/></svg><svg class="t"><use href="#ruler"/></svg><svg class="a"><use href="#dn"/></svg><svg class="t"><use href="#tip"/></svg><svg class="t off"><use href="#action"/></svg><svg class="a dim"><use href="#dn"/></svg></div>

<div class="bar"><b class="h first"></b><svg class="t"><use href="#dsm"/></svg><svg class="t"><use href="#gpkg"/></svg><svg class="t"><use href="#vec"/></svg><svg class="t"><use href="#feather"/></svg><svg class="t"><use href="#chip"/></svg><svg class="t"><use href="#mesh"/></svg><svg class="t"><use href="#virt"/></svg><b class="h"></b><svg class="t off"><use href="#pencils"/></svg><svg class="t"><use href="#pencil"/></svg><svg class="t off"><use href="#save"/></svg><svg class="t off"><use href="#line"/></svg><svg class="a dim"><use href="#dn"/></svg><svg class="t off"><use href="#vec"/></svg><svg class="t off"><use href="#vtool"/></svg><svg class="a dim"><use href="#dn"/></svg><svg class="t off"><use href="#bulk"/></svg><svg class="t off"><use href="#trash"/></svg><svg class="t off"><use href="#cut"/></svg><svg class="t off"><use href="#copy"/></svg><svg class="t off"><use href="#paste"/></svg><svg class="t tint"><use href="#undo"/></svg><svg class="t tint"><use href="#redo"/></svg><b class="h"></b><svg class="t"><use href="#tagy"/></svg><svg class="t"><use href="#pie"/></svg><b class="s"></b><svg class="t"><use href="#tagb"/></svg><svg class="t"><use href="#tagr"/></svg><b class="s"></b><svg class="t off"><use href="#tagb"/></svg><svg class="t off"><use href="#tage"/></svg><svg class="t off"><use href="#taga"/></svg><svg class="t off"><use href="#tago"/></svg><svg class="t off"><use href="#tagp"/></svg><b class="h"></b><svg class="t"><use href="#globe1"/></svg><svg class="t"><use href="#globe2"/></svg><svg class="t"><use href="#bino"/></svg><b class="h"></b><svg class="t"><use href="#pycon"/></svg><svg class="t"><use href="#cloud"/></svg><b class="h"></b><svg class="t"><use href="#help"/></svg><b class="h"></b></div>

<div class="bar"><b class="h first"></b><svg class="t"><use href="#magnet"/></svg><svg class="t off"><use href="#snap"/></svg><span class="blank"><svg class="a dim"><use href="#dn"/></svg></span><span class="field spinbox">12<svg class="sp"><use href="#spin"/></svg></span><span class="field unit">пикс<svg class="a dim"><use href="#dn"/></svg></span><svg class="t"><use href="#topo"/></svg><svg class="t"><use href="#overlap"/></svg><svg class="t off"><use href="#cross"/></svg><svg class="t off"><use href="#selfsnap"/></svg><svg class="a dim"><use href="#dn"/></svg><svg class="t off"><use href="#trace"/></svg></div>
<div class="bar last"><b class="h first"></b><b class="h wide"></b><svg class="t"><use href="#qosm"/></svg><svg class="t"><use href="#osmedit"/></svg></div>

<main class="work">
<aside class="left">
<div class="dockhead"><span>Браузер (2)</span><svg><use href="#float"/></svg><svg><use href="#close"/></svg></div>
<div class="tools"><svg><use href="#addl"/></svg><svg><use href="#refresh"/></svg><svg><use href="#filter"/></svg><svg><use href="#up"/></svg><svg><use href="#info"/></svg></div>
<div class="browser"><div class="tree">
<div class="row"><i></i><svg><use href="#fav"/></svg><span>Избранное</span></div>
<div class="row"><i class="r"></i><svg><use href="#bmk"/></svg><span>Пространственные закладки</span></div>
<div class="row"><i class="r"></i><svg><use href="#home"/></svg><span>Домашний каталог</span></div>
<div class="row"><i class="r"></i><svg><use href="#folder"/></svg><span>C:\ (Windows)</span></div>
<div class="row"><i class="r"></i><svg><use href="#folder"/></svg><span>D:\ (Data)</span></div>
<div class="row"><i class="r"></i><svg><use href="#folder"/></svg><span>E:\ (USB DISK)</span></div>
<div class="row"><i></i><svg><use href="#gpkgb"/></svg><span>GeoPackage</span></div>
<div class="row"><i></i><svg><use href="#featherb"/></svg><span>SpatiaLite</span></div>
<div class="row"><i></i><svg><use href="#pg"/></svg><span>PostgreSQL</span></div>
<div class="row"><i></i><svg><use href="#hana"/></svg><span>SAP HANA</span></div>
<div class="row"><i></i><svg><use href="#mssql"/></svg><span>MS SQL Server</span></div>
<div class="row"><i></i><svg><use href="#oracle"/></svg><span>Oracle</span></div>
<div class="row"><i></i><svg><use href="#globew"/></svg><span>WMS/WMTS</span></div>
<div class="row"><i></i><svg><use href="#vt"/></svg><span>Vector Tiles</span></div>
<div class="row top"><i class="d"></i><svg class="grid"><use href="#xyz"/></svg><span>XYZ Tiles</span></div>
<div class="row sub"><svg class="grid"><use href="#xyz"/></svg><span>Mapzen Global Terrain</span></div>
<div class="row sub"><svg class="grid"><use href="#xyz"/></svg><span>OpenStreetMap</span></div>
</div><div class="scroll"><b class="sbtn"><i class="u"></i></b><b class="thumb"></b><b class="track"></b><b class="sbtn bot"><i class="d"></i></b></div></div>
<div class="split"></div>
<div class="dockhead layers"><span>Слои</span><svg><use href="#float"/></svg><svg><use href="#close"/></svg></div>
<div class="tools"><svg><use href="#brush"/></svg><svg><use href="#group"/></svg><svg><use href="#eye"/></svg><svg><use href="#filterd"/></svg><svg><use href="#eps"/></svg><svg class="arr dim"><use href="#dn"/></svg><svg><use href="#down"/></svg><svg><use href="#up"/></svg><svg><use href="#dell"/></svg></div>
<div class="layerbox">
<div class="row"><i></i><svg class="chk"><use href="#check"/></svg><b class="sym"></b><span class="u">roads</span></div>
<div class="row"><i class="d"></i><svg class="chk"><use href="#check"/></svg><svg class="ras"><use href="#raster"/></svg><span>Positron</span></div>
</div>
</aside>

<section class="canvas">
<div class="message"><svg class="bubble" viewBox="0 0 22 20"><path d="M4 1h14q3 0 3 3v7q0 3-3 3h-5l-5 5 1-5H4q-3 0-3-3V4q0-3 3-3z" fill="#fcfcfc" stroke="#8a8f94"/></svg><span>Multiple plugin updates are available</span><b class="btn">Install Updates...</b><svg class="x" viewBox="0 0 20 20"><circle cx="10" cy="10" r="10" fill="#32363a"/><path d="M6 6l8 8M14 6l-8 8" stroke="#fff" stroke-width="3"/></svg></div>
<svg class="map" viewBox="352 255 564 731">
<path d="M352 255h564v731H352z" fill="#fafaf8"/>
<g fill="#f5f5f3"><path d="M430 480l90 10 120 40 120 50-5 170-160 40-90-110-50-30z"/><path d="M352 650l60 20 60 150-30 60-90 10z"/><path d="M640 870l100 30-30 90H630z"/><path d="M352 365l50 30 10 60-60 5zM460 380l60-30 100 60-20 80-90-20zM480 820l160 20 10 60-60 20-90-40z"/><path d="M735 450l40 15-40 80-40-20zM780 590l60-10 10 70-40 5z"/></g>
<g fill="#eff4ef"><path d="M352 258l22-3h94l9 22 20 6-3 25-25-6-20-8-60-12-37-10z"/><path d="M505 305l30-28 30-12 72 10-32 32-35-3z" fill="#f3f6f2"/><path d="M391 376l26-9 40 4 12 18-4 12-38 30-18-4-12-30z" fill="#e9f1eb"/><path d="M441 318l15-5 14 14-4 20-10-15z"/><path d="M480 355q45-48 95-38l-8 20-60 16z"/><path d="M650 275l60 15 60-8 5 30-22 40 5 30-18 35-55 5-40-25-20-50 15-40z"/><path d="M700 437h30l-3 50-42-10 2-25z"/><path d="M852 255h36l-22 70-18 60-10 40-15-15 12-60z"/><path d="M848 365l68 12v12l-68-12z"/><path d="M816 450l12-35 8 10-12 40-25 50-5-10z"/><path d="M840 430l20 0-5 25-18-5zM630 378l25-5-5 30-15 5zM632 475l40 30 5 30-35-10z"/><path d="M352 512l38-8 12 12 2 80-12 20-40-40z"/><path d="M500 672l28-28 55-10 7 70-60 32-30-38z" fill="#e8f0eb"/><path d="M413 742l22 5 30-8 18 35-30 17-30-5-12-20z" fill="#e8f0eb"/><path d="M502 814l56 14-18 26-24-6z" fill="#e8f0eb"/><path d="M666 798l8-22 35 5 44 28-5 18-55-8z" fill="#ebf2ed"/><path d="M600 768l33 8v12l-33-8zM645 848l45-2-22 24-25-8zM824 805l50 10 5 46-50-15zM850 622l66 2v80l-36-20-25-20zM785 785l6-40 35-15 5 30-25 30zM888 892l25-6-5 50-20 5zM710 884l25 10-12 28-18-8zM470 960l22-8 5 20-25 10z"/><path d="M356 945l35-38 18 2-10 22-35 20zM375 940l20-8-5 14-14 5z" fill="#edf3ee"/></g>
<g fill="#d5dadd"><path d="M402 465l14-1 5 12 10 20 4 14-10 26-8 16-11-4 2-18-6-24z"/><path d="M425 572l10-6 12 14-10 11-11-8zM434 592l17-4 9 13-3 15-17 5-6-12zM352 590l18 8 2 9-10 5-10-3z"/><path d="M717 480l10-4 10 8v3h-15zM860 817l8 12-4 2-8-12zM373 370l10-4-4 8-6 1zM492 452l6 0v8l-5-3zM538 520l6-2 1 9-6-1z"/><path d="M563 727l6 0 8 14-7 3-6-4zM916 942v10l-18 10-22 4 12-10 18-10z"/><path d="M425 588l4 3-5 4zM890 905l3 0-1 15-3 2z"/></g>
<g transform="translate(350 590) scale(.33333)" fill="none" stroke="#d5dadd"><path d="M0 925Q80 900 180 908L280 950 370 965Q470 1040 485 1188" stroke-width="32"/><path d="M300 955Q180 990 75 1070L60 1120 45 1160 0 1185" stroke-width="26"/></g>
<g fill="none" stroke="#d6dde1" stroke-width="1.100"><path d="M440 320q10-5 16 2 5 10 2 25 8 15 10 42-5 15-20 22-12 8-20 20M757 255q20 15 15 32 20 5 20 10-5 10 0 10 20 15 40 17-20 0-18 15 5 20 0 30 15 15 5 25-20 0-20 15-5 20-15 15"/><path d="M815 425q30 0 40 25v40l-10 20q-20-5-25 10 15 20 5 35-15 10-5 25l10 45q10-5 25 10-10 25 5 45 30-20 50 5 10-10 6-20M352 815q5 30 30 38l45-5M352 938l22 22q40-5 55-15M590 635l10-3 15 10q20-10 40-8M650 645q30-5 55 30 15 30 60 15l35-20 30 2"/></g>
<g fill="none" stroke="#dfdfdf" stroke-width="1"><path d="M352 382q20 0 40 8l16-20-20-25M391 390l12 20M451 417l20-24 2-25 8-10M528 404l5-30-7-8 20-5 40 10 30 20 15 35M352 440l30 20M640 255l5 15 25 60-8 35 10 25M640 268l40 1 25-8 8-6M350 674l24 5M372 660l-15 100M352 710l20 5M352 740l15 5M352 770l25 6M352 810l64-10M414 797l4 25-5 30 10 30M420 840l65-28 100 40 50-60M415 870l110-50M495 812l20 70 25 110M508 885l85-15 20 35 25 30 50 30M525 858l20 85 30 30M540 920l55-8 20 15M480 860l60-10 30 10 25 18M352 850h70M352 882h50l20-40M655 875l30-6 100 35-15 30M680 870l-50 110M712 880l-40 90M757 868l30 10-10 40M830 920l-5 15-1 50M868 850q-12-2-30 12M660 540l60-15M700 430l-30 60 45 20M745 440l-25 40M540 920l40 50 50 10M430 870l55 90M470 830l25 80M575 820l-25 35"/></g>
<g fill="none" stroke="#eaecec" stroke-width=".8"><path d="M360 265l80 40 80-30 60 25M440 260l10 45M520 310l-30 60 80 10M500 335l70-18M500 345l90-20M535 370l60 20M550 405l60 20M545 425l60 15M600 620l100 40M610 740l60 20M380 630l50 30 10 80M450 820l-60 80M470 830l-60 90M370 920l80 60M460 940l-60 40M560 860l80-30M580 880l60 40M690 300v70M745 330l80-25M750 350l70-25M755 370l60 10M880 300l-20 90M860 430l50-10v40M470 480l20 50M540 480l-20 50M600 510l40 30M660 590l50 30M700 700l50 20M360 700l60 20M355 760l60 20M500 930l60-30M650 930l80 40"/></g>
<g fill="none" stroke-linejoin="round"><g stroke="#e1e3e3" stroke-width="5"><path d="M352 280q40 0 85 14 60 12 130 14 50 3 66 35 5 50 13 140l22 35 80 25q20 20 30 55l75 130q30 30 27 75 0 50 45 85"/><path d="M352 403l30 22M595 315l-22 45-21 52M595 315q50-30 43-60M352 485l25-10M352 891q30-8 60-5 45 12 65 27l32-30 70-12 60 20 45 30 30 8 90 17M494 802l13 80 12 70 5 35M584 803l90 26 65-2 95 30 60-7 30-25M782 812l-30 60-40 80-8 38M835 860v125M777 935v51M418 887l-2 20 20 40 14 39M480 910q-30 30-30 76"/></g><g stroke="#fff" stroke-width="3"><path d="M352 280q40 0 85 14 60 12 130 14 50 3 66 35 5 50 13 140l22 35 80 25q20 20 30 55l75 130q30 30 27 75 0 50 45 85"/><path d="M352 403l30 22M595 315l-22 45-21 52M595 315q50-30 43-60M352 485l25-10M352 891q30-8 60-5 45 12 65 27l32-30 70-12 60 20 45 30 30 8 90 17M494 802l13 80 12 70 5 35M584 803l90 26 65-2 95 30 60-7 30-25M782 812l-30 60-40 80-8 38M835 860v125M777 935v51M418 887l-2 20 20 40 14 39M480 910q-30 30-30 76"/></g></g>
<path d="M352 257l30 36h13v15l31 14 13-24 65 31 80-13 16 15 19 55M777 595v90l-2 20 15 100M425 612l25 110 30 100M352 447l38 55 18 60 10 60M795 590l40 15M720 550v10l50 20v15M907 710l9 40" fill="none" stroke="#e9c5c9" stroke-width=".9" stroke-dasharray="2 2"/>
<g class="maplabels">
<text x="352" y="341" textLength="52">ROZHILOVKA</text><text x="352" y="366" textLength="44" class="big">rgolovo…</text><text x="571" y="461" textLength="34">PARNAS</text><text x="780" y="287" textLength="57" class="med">Капитолово</text><text x="650" y="446" textLength="32" class="big">Bugry</text><text x="790" y="407" textLength="29" class="med">Lavriki</text><text x="861" y="495" textLength="33" class="big">Novoe</text><text x="848" y="506" textLength="60" class="big">Devyatkino</text><text x="781" y="563" textLength="39" class="big">Murino</text><text x="493" y="534" textLength="53">SHUVALOVO-</text><text x="505" y="542" textLength="32">OZERKI</text><text x="389" y="560" textLength="51">SHUVALOVO</text><text x="431" y="619" textLength="31">OZERKI</text><text x="806" y="638" textLength="36">МУРИНО</text><text x="450" y="722" textLength="44">UDELNAYA</text><text x="519" y="797" textLength="30">LESNOI</text><text x="791" y="785" textLength="34">RUCHYY</text><text x="886" y="789" textLength="31">RYBATS</text><text x="894" y="797" textLength="22">VILLA</text><text x="701" y="845" textLength="53">PISKAREVKA</text><text x="595" y="861" textLength="55">KUSHELEVKA</text><text x="351" y="870" textLength="25">OVAYA</text><text x="351" y="878" textLength="31">REVNYA</text><text x="351" y="937" textLength="14">OVA</text><text x="519" y="947" textLength="35">VYBORG</text><text x="527" y="955" textLength="19">SIDE</text><text x="667" y="982" textLength="62">POLYUSTROVO</text>
</g>
<g class="roads">
<g transform="translate(350 216) scale(.33333)">
<path d="M80 617 185 690 215 735 245 815 290 960 322 1060 338 1124M80 777 205 705Q240 685 275 695L365 733 525 795 869 938M610 587 555 718 520 800 480 925 420 1070 404 1124M250 830 480 928 630 988 845 1075M680 875 630 988 573 1124M840 930 790 1045 759 1124M450 912 245 972 205 1015M325 1068 360 1055Q380 1045 405 1055L475 1083 577 1126"/>
<path class="n" d="M157 580 170 618 187 628 184 690M184 675 250 662 272 640 303 605M528 566 480 690 555 718 717 783M795 592 717 783 694 843 855 905M820 585 877 802M370 735 310 865 318 895 360 1055M525 820 575 838 680 878 845 945M577 842 525 955 475 1080 459 1124M212 1015 300 1010M350 1003Q385 985 400 993L435 1010M42 998 55 988 155 957 178 1060 205 1092 212 1124M200 1025 218 1075 236 1124M202 1090 220 1088"/>
<path class="w" d="M522 800 500 862M825 950 795 1035"/>
</g>
<g transform="translate(630 216) scale(.33333)">
<path d="M27 937 90 965 190 1005 290 1045 385 1083Q405 1090 405 1110V1124M3 1074 140 1130 240 1170M190 1005 140 1130M55 765 75 805 115 840 150 905"/>
<path class="n" d="M120 515 108 640 97 690 55 765 37 800 5 880-5 930M75 805 115 840 150 905 300 975V958L335 972 395 1005 410 1020 395 1045 345 1043 325 985M335 1018 355 1012M50 790 55 820 10 915M25 880 45 840Q75 820 110 838M75 845 95 858 115 845M409 767 355 910 325 985 305 990M355 910 455 950 485 950 478 965 455 955M488 978 530 1030M530 585 545 615 580 640 597 680 615 768Q598 800 603 820L622 865 600 900 587 925 558 960 552 1000 565 1025M772 840 735 855 670 895 667 970Q655 1005 635 1013L610 1010 530 1043 485 1105Q465 1120 410 1130M90 965 40 1090 28 1124M290 1045 258 1124M0 910H30"/>
<path class="w thick" d="M370 1083 349 1124M115 845 145 898"/><circle class="n" cx="400" cy="1018" r="9"/><circle class="f" cx="33" cy="911" r="10"/><circle class="f" cx="499" cy="1137" r="7"/>
</g>
<g transform="translate(350 590) scale(.33333)">
<path d="M337 0 365 90 360 160 348 230 372 345 420 580 432 640M405 0 368 90M358 160 540 145 690 128Q760 125 800 150L870 190M573 3 730 70 870 125M760 0 725 75 712 125 735 340 740 400 752 520M75 275 100 273 285 225 360 160 435 290 572 465 632 535 700 642M155 393 192 625 425 580 570 465 735 340 870 225M52 552 270 605"/>
<path class="n" d="M752 520 717 632M460 0 428 85 437 180Q435 215 398 230M370 90 545 73 575 0M545 73 550 140M868 0 827 105M235 0 262 65 300 95 328 180M207 0 165 95 210 122 230 195 212 245 242 385M212 0 222 50 200 110M435 290 370 303M45 365 155 393 178 405 192 388 210 407 242 387 298 375V360L372 345M75 463 165 485M430 583 580 627 600 560 632 535 687 500 752 520M687 500 625 427M715 160 860 235M780 300 787 358 768 375 740 377M787 358 870 385M748 473 870 515"/>
<path class="w" d="M400 581 430 576"/>
</g>
<g transform="translate(630 590) scale(.33333)">
<path d="M240 48 405 112M143 0 85 150 60 195Q40 220 0 250M350 0 305 80 205 290 130 430 5 685M405 0 398 290 405 390 430 540 445 675M28 124 85 150 180 198 330 285 400 290M29 190 55 205 205 290 410 392M28 384 90 408 195 460 330 525 435 578M650 315 468 662"/>
<path class="n" d="M260 0 180 190M405 10 460 0M0 225 93 272M115 240 38 385M285 337 218 468M405 400 333 525M195 462 108 635M28 514 80 530M495 13 515 18 630 160 638 250 655 295 650 315M655 305 668 310 710 355 820 487M592 327 607 345V400Q640 385 675 390"/>
<path class="w thick" d="M350-2 315 65M711 352 812 482"/><path d="M720 362 808 476" class="gap"/><circle class="n" cx="624" cy="345" r="11"/><circle class="n" cx="644" cy="352" r="11"/><circle class="f" cx="435" cy="577" r="10"/>
</g></g>
</svg>
</section>

<aside class="right">
<div class="dockhead"><span>Инструменты анализа</span><svg><use href="#float"/></svg><svg><use href="#close"/></svg></div>
<div class="tools"><svg><use href="#gears"/></svg><svg><use href="#pyd"/></svg><svg><use href="#clock"/></svg><svg><use href="#doc"/></svg><b class="s"></b><svg><use href="#edit"/></svg><b class="s"></b><svg><use href="#wrench"/></svg></div>
<div class="find"><svg><use href="#search"/></svg><span>Поиск...</span></div>
<div class="toolbox">
<div class="row"><i class="r"></i><svg><use href="#clock"/></svg><span>Недавно использованные</span></div>
<div class="row"><i class="r"></i><svg><use href="#qgis"/></svg><span>Анализ растров</span></div>
<div class="row"><i class="r"></i><svg><use href="#qgis"/></svg><span>Вектор - Анализ</span></div>
<div class="row"><i class="r"></i><svg><use href="#qgis"/></svg><span>Вектор - Выборка</span></div>
<div class="row"><i class="r"></i><svg><use href="#qgis"/></svg><span>Вектор - Геометрия</span></div>
<div class="row"><i class="r"></i><svg><use href="#qgis"/></svg><span>Вектор - общие инструменты</span></div>
<div class="row"><i class="r"></i><svg><use href="#qgis"/></svg><span>Вектор - Создание</span></div>
<div class="row"><i class="r"></i><svg><use href="#qgis"/></svg><span>Вектор - Таблица атрибутов</span></div>
<div class="row"><i class="r"></i><svg><use href="#qgis"/></svg><span>Векторные тайлы</span></div>
<div class="row"><i class="r"></i><svg><use href="#qgis"/></svg><span>Графики и диаграммы</span></div>
<div class="row"><i class="r"></i><svg><use href="#qgis"/></svg><span>Инструменты пространственных операций</span></div>
<div class="row"><i class="r"></i><svg><use href="#qgis"/></svg><span>Интерполяция</span></div>
<div class="row"><i class="r"></i><svg><use href="#qgis"/></svg><span>Картография</span></div>
<div class="row"><i class="r"></i><svg><use href="#qgis"/></svg><span>Меш</span></div>
<div class="row"><i class="r"></i><svg><use href="#qgis"/></svg><span>Растр</span></div>
<div class="row"><i class="r"></i><svg><use href="#qgis"/></svg><span>Растр - Анализ рельефа</span></div>
<div class="row"><i class="r"></i><svg><use href="#qgis"/></svg><span>Растр - Создание</span></div>
<div class="row"><i class="r"></i><svg><use href="#qgis"/></svg><span>Сетевой анализ</span></div>
<div class="row"><i class="r"></i><svg><use href="#qgis"/></svg><span>Слои</span></div>
<div class="row"><i class="r"></i><svg><use href="#qgis"/></svg><span>Файлы</span></div>
<div class="row"><i class="r"></i><svg><use href="#qgis"/></svg><span>Database</span></div>
<div class="row"><i class="r"></i><svg><use href="#qgis"/></svg><span>GPS</span></div>
<div class="row"><i class="r"></i><svg><use href="#gdal"/></svg><span>GDAL</span></div>
<div class="row"><i class="r"></i><svg><use href="#grass"/></svg><span>GRASS</span></div>
<div class="row"><i class="r"></i><svg><use href="#ice"/></svg><span>ICEtool</span></div>
<div class="row"><i class="r"></i><svg><use href="#qneat"/></svg><span>QNEAT3 - Qgis Network Analysis Toolbox</span></div>
<div class="row"><i class="r"></i><svg><use href="#qosm"/></svg><span>QuickOSM</span></div>
<div class="row"><i class="r"></i><svg><use href="#saga"/></svg><span>SAGA</span></div>
</div>
</aside>
</main>

<footer class="status">
<span class="field locate"><svg><use href="#search"/></svg>Искать (Ctrl+K)</span>
<span class="lbl l1">Координаты</span><span class="field coord">3370591 8401418</span>
<svg class="mouse" viewBox="0 0 20 22"><path d="M2 2l8 10" stroke="#222" stroke-width="5"/><path d="M2 7l4-3M4 10l4-3M7 2l2 4" stroke="#eee" stroke-width="1.200"/><ellipse cx="11" cy="14" rx="6" ry="4.500" transform="rotate(50 11 14)" fill="#fff" stroke="#222" stroke-width="2"/><path d="M8 14l5-4M10 10l4 7" stroke="#222" stroke-width="1.500"/><path d="M1 11q0 7 6 9M12 2q5 2 5 7M15 1q3 2 3 5" fill="none" stroke="#222" stroke-width="1.300"/></svg>
<span class="lbl l2">Масштабировать</span><span class="field scale">1:200425<svg class="a"><use href="#dn"/></svg></span>
<svg class="lock" viewBox="0 0 16 20"><path d="M4 9V5q0-3.500 4-3.500T12 5v4" fill="none" stroke="#aaa" stroke-width="2.200"/><rect x="1" y="8" width="14" height="11" rx="1.500" fill="#666"/><path d="M2 11h12M2 14h12M2 17h12" stroke="#555"/></svg>
<span class="lbl l3">Увеличение</span><span class="field zoom">100%<svg class="sp"><use href="#spin"/></svg></span>
<span class="lbl l4">Поворот</span><span class="field rot">0,0 °<svg class="sp"><use href="#spin"/></svg></span>
<svg class="chk"><use href="#check"/></svg><span class="lbl l5">Отрисовка</span>
<svg class="crs" viewBox="0 0 18 18"><circle cx="9" cy="9" r="8" fill="#ddd" stroke="#777"/><ellipse cx="9" cy="9" rx="4" ry="8" fill="none" stroke="#777" stroke-width="1.300"/><path d="M0 9h18M2 5h14M2 13h14M9 1v16" stroke="#777" stroke-width="1.300"/></svg><span class="lbl l6">EPSG:3857</span>
<svg class="chat" viewBox="0 0 20 20"><path d="M10 1c6 0 9.500 3.300 9.500 7.300s-3 7-7.500 7.500l2 4q-5-1-6-4Q.5 14.800.5 8.300.5 1 10 1z" fill="#595959"/><circle cx="5.500" cy="8" r="1.300" fill="#fff"/><circle cx="10" cy="8" r="1.300" fill="#fff"/><circle cx="14.500" cy="8" r="1.300" fill="#fff"/></svg>
</footer>
</div>
</body>
</html>
```
FILE: styles.css
```css
* { box-sizing: border-box; }
body { margin: 0; height: 1026px; overflow: hidden; background: linear-gradient(#dcdcdc 50%, #1f2125 50%); font-family: "Noto Sans", sans-serif; font-size: 14.3px; color: #000; }
svg { display: block; flex: none; }
.defs { display: none; }
.window { height: 1021px; display: flex; flex-direction: column; background: #f0f0f0; border-top: 1px solid #b0b0b0; border-radius: 8px 4px 0 6px; overflow: hidden; white-space: nowrap; }
.titlebar { height: 37px; flex: none; display: flex; align-items: center; background: #f3f3f3; color: #8b8b8b; padding-left: 8px; padding-bottom: 1px; }
.logo { width: 20px; height: 20px; }
.title { margin-left: 6px; font-size: 14.3px; letter-spacing: -.1px; flex: 1; }
.winbtns { width: 130px; height: 14px; margin-right: 18px; }
.menu { height: 24px; flex: none; display: grid; grid-template-columns: 50px 51px 26px 35px 75px 54px 48px 38px 88px 66px 33px 59px 25px 107px 58px; column-gap: 15px; padding-left: 10px; line-height: 25px; color: #979797; font-size: 14.3px; }
.bar { height: 39px; flex: none; display: flex; align-items: center; border-top: 1px solid #b9b9b9; background: linear-gradient(#fafafa, #eee); }
.bar.last { height: 38px; }
.t { width: 24px; height: 24px; margin: 0 4.5px; overflow: visible; }
.on { width: 33px; height: 32px; display: flex; align-items: center; border: 1px solid #acacac; border-radius: 3px; background: #dcdcdc; }
.on .t { margin: 0 3.5px; }
.off { filter: grayscale(.75); opacity: .35; }
.tint { opacity: .4; }
.a { width: 10px; height: 6px; margin: 0 3px 0 2px; }
.dim { opacity: .6; }
.h { flex: none; width: 18px; height: 18px; background: linear-gradient(#b9b9b9 1px, transparent 1px) 8px 0 / 1px 3px repeat-y, linear-gradient(#b9b9b9 1px, transparent 1px) 11px 0 / 1px 3px repeat-y; }
.h.first { width: 13.5px; background-position: 5px 0, 8px 0; }
.h.wide { width: 19px; background-position: 11px 0, 14px 0; }
.s { flex: none; width: 8px; height: 19px; background: linear-gradient(#d0d0d0, #d0d0d0) 4px 0 / 1px 19px no-repeat; }
.blank { width: 33px; height: 24px; display: flex; justify-content: flex-end; align-items: flex-end; }
.glyph { font-family: "DejaVu Sans", sans-serif; font-weight: bold; fill: #333; }
.glyph.red { fill: #d11; }
.serif { font-family: "Liberation Serif", serif; font-weight: bold; }
.plain { font-weight: normal; }
.it { font-style: italic; }

.field { flex: none; height: 24px; display: flex; align-items: center; justify-content: space-between; padding-left: 5px; border: 1px solid #b1b1b1; border-radius: 2px; background: #fff; font-family: "DejaVu Sans Condensed", "DejaVu Sans", sans-serif; font-size: 12px; letter-spacing: .2px; }
.spinbox { width: 92px; color: #777; background: #f0f0f0; }
.unit { width: 116px; margin: 0 1.5px 0 2px; color: #777; background: linear-gradient(#fdfdfd, #eee); }
.unit .a { margin-right: 8px; }
.sp { width: 17px; height: 22px; }
.bar .sp { opacity: .6; }

.work { flex: 1; min-height: 0; display: grid; grid-template-columns: 344px 573px 476px; border-top: 1px solid #b9b9b9; }
.left, .right { display: flex; flex-direction: column; min-width: 0; min-height: 0; }
.dockhead { height: 24px; flex: none; display: flex; align-items: center; padding: 0 2px 0 3px; font-size: 14.5px; letter-spacing: -.1px; gap: 3px; }
.dockhead span { flex: 1; line-height: 22px; padding-bottom: 2px; }
.dockhead svg { width: 11px; height: 11px; margin-bottom: 4px; }
.left .dockhead { padding-right: 2px; }
.tools { height: 27px; flex: none; display: flex; align-items: center; gap: 9px; padding: 0 0 5px 7px; }
.tools svg { width: 16px; height: 16px; overflow: visible; }
.tools .arr { width: 9px; height: 5px; margin: 0 0 0 -3px; }
.browser { height: 362px; flex: none; display: flex; border: 1px solid #b0b0b0; border-left: 0; background: #fff; }
.tree { flex: 1; overflow: hidden; padding-top: 1px; }
.row { height: 22px; display: flex; align-items: center; line-height: 22px; font-size: 14.3px; letter-spacing: -.06px; }
.row > i { width: 20px; flex: none; display: flex; justify-content: center; }
.row > svg { width: 20px; height: 20px; margin-right: 6px; }
.row > svg.grid { width: 18px; height: 18px; margin: 0 7px 0 1px; }
.row.sub { padding-left: 37px; }
i.r::after, i.d::after, i.u::after { content: ""; border: 4px solid transparent; }
i.r::after { border-left: 5px solid #5a5a5a; border-right: 0; margin-right: 4px; }
i.d::after { border-width: 5px 5px 0; border-top-color: #5a5a5a; }
i.u::after { border-width: 0 5px 5px; border-bottom-color: #5a5a5a; }
.tree i.d::after { margin-right: 3px; }
.scroll { width: 17px; display: flex; flex-direction: column; border-left: 1px solid #b9b9b9; }
.sbtn { height: 17px; display: flex; align-items: center; justify-content: center; border-bottom: 1px solid #c0c0c0; }
.sbtn.bot { border: 0; border-top: 1px solid #c0c0c0; }
.sbtn i { display: flex; }
.thumb { height: 249px; background: linear-gradient(90deg, #fff, #f1f1f1); }
.track { flex: 1; background: #e3e3e3; border-top: 1px solid #b9b9b9; }
.split { height: 7px; flex: none; display: flex; }
.split::after { content: ""; width: 18px; height: 1px; margin: 3px 0 0 165px; background: repeating-linear-gradient(90deg, #b4b4b4 0 1px, transparent 1px 3px); }
.layers { height: 23px; }
.layerbox { flex: 1; border: 1px solid #b0b0b0; border-left: 0; background: #fff; padding-top: 1px; }
.layers + .tools { height: 28px; padding-bottom: 5px; }
.layerbox .row { font-weight: bold; letter-spacing: -.1px; }
.layerbox .row i { width: 28px; padding-right: 4px; }
.layerbox .chk, .status .chk { width: 17px; height: 17px; margin-right: 6px; }
.sym { width: 19px; height: 3px; background: #e60f38; margin-right: 6px; }
.row .u { text-decoration: underline; }
.row .ras { margin: 0 6px 0 0; }

.canvas { margin: 0 0 0 7px; width: 566px; border: 1px solid #b5b5b5; display: flex; flex-direction: column; overflow: hidden; }
.message { height: 36px; flex: none; display: flex; align-items: center; border: 1px solid #b4cde6; border-left: 0; background: #e6f4fe; color: #2b4fa0; font-family: "DejaVu Sans Condensed", "DejaVu Sans", sans-serif; font-size: 12px; letter-spacing: .22px; padding-left: 11px; }
.bubble { width: 22px; height: 20px; margin-right: 12px; }
.message span { width: 337px; }
.btn { width: 104px; height: 25px; border: 1px solid #a5a5a5; border-radius: 3px; background: linear-gradient(#fff, #eee); color: #000; font-weight: normal; text-align: center; line-height: 23px; }
.x { width: 20px; height: 20px; margin-left: 34px; }
.map { width: 564px; height: 731px; }
.maplabels { font-family: Inter, sans-serif; font-size: 8px; fill: #9aa7b4; }
.maplabels .big { font-size: 11px; font-weight: 600; }
.maplabels .med { font-size: 9px; font-weight: 600; }
.roads { fill: none; stroke: #e60f38; stroke-width: 12.5; stroke-linejoin: round; }
.roads .n { stroke-width: 10.5; }
.roads .w { stroke-width: 19; }
.roads .thick { stroke-width: 17; }
.roads .gap { stroke: #f3c3cb; stroke-width: 2; }
.roads .f { fill: #e60f38; stroke: none; }

.right { padding-left: 7px; }
.right .dockhead { padding-left: 4px; padding-right: 0; margin-right: -2px; }
.right .dockhead svg { margin-left: -1px; }
.right .tools { padding-left: 8px; }
.right .tools .s { margin: 0 -4px; }
.find { height: 27px; flex: none; display: flex; align-items: center; border: 1px solid #b0b0b0; border-right: 0; border-radius: 2px 0 0 2px; background: #fff; padding: 0 0 0 9px; color: #777; font-family: "DejaVu Sans Condensed", "DejaVu Sans", sans-serif; font-size: 12px; letter-spacing: .1px; }
.find svg { width: 17px; height: 17px; margin-right: 7px; }
.toolbox { flex: 1; border: 1px solid #b0b0b0; border-top: 0; border-right: 0; background: #fff; padding: 1px 0 0 6px; }
.toolbox .row { letter-spacing: .05px; }
.toolbox .row i { width: 22px; padding-right: 5px; }

.status { height: 34px; flex: none; display: flex; align-items: center; padding: 0 0 0 3px; font-family: "DejaVu Sans Condensed", "DejaVu Sans", sans-serif; font-size: 12px; }
.status .field { height: 25px; padding-left: 5px; }
.status .locate { width: 200px; margin-right: 144px; justify-content: flex-start; color: #777; padding-left: 9px; }
.locate svg { width: 16px; height: 16px; margin-right: 8px; }
.l1 { width: 74px; }
.status .coord { width: 117px; padding-left: 6px; }
.mouse { width: 20px; height: 22px; margin: 0 13px 0 4px; }
.l2 { width: 104px; letter-spacing: .2px; }
.status .scale { width: 92px; padding-left: 3px; }
.scale .a { margin-right: 8px; }
.lock { width: 16px; height: 20px; margin: 0 9px 0 13px; }
.l3 { width: 73px; letter-spacing: .2px; }
.status .zoom { width: 92px; margin-right: 10px; padding-left: 4px; }
.l4 { width: 58px; letter-spacing: .1px; }
.status .rot { width: 89px; margin-right: 6px; padding-left: 4px; }
.l5 { width: 77px; letter-spacing: .1px; }
.crs { width: 18px; height: 18px; margin-right: 3px; }
.l6 { width: 88px; letter-spacing: .4px; }
.chat { width: 20px; height: 20px; }
```
